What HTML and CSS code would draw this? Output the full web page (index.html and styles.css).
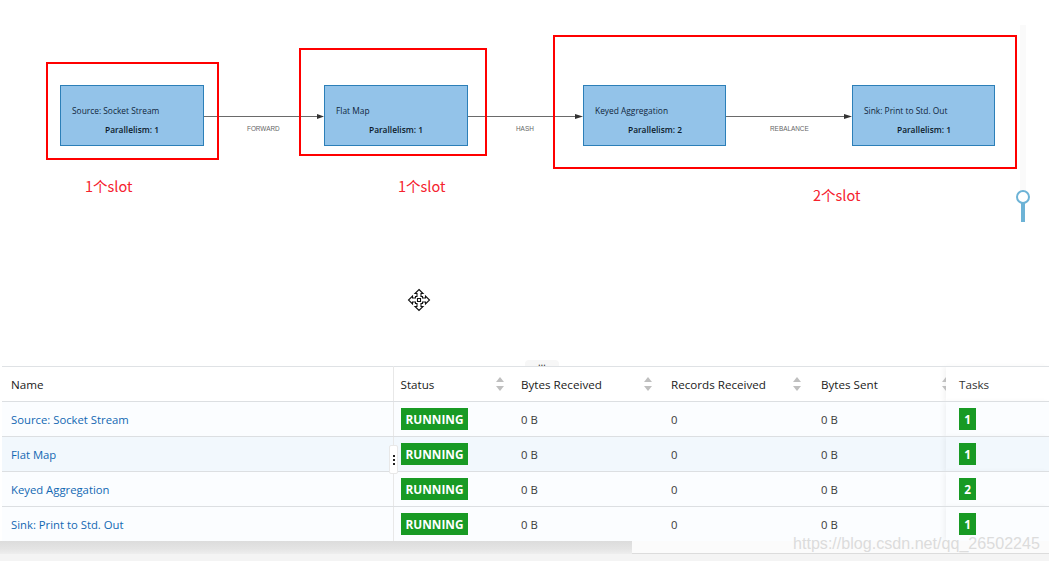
FILE: index.html
```html
<!DOCTYPE html>
<html lang="zh">
<head>
<meta charset="utf-8">
<title>Flink job plan</title>
<link rel="stylesheet" href="styles.css">
</head>
<body>
<section class="canvas">
  <svg class="edges" width="1049" height="366" viewBox="0 0 1049 366">
    <g class="edge">
      <path d="M204 116.5H318"/><path d="M468 116.5H577"/><path d="M726 116.5H846"/>
    </g>
    <g class="arrow">
      <path d="M317 114L324 116.5L317 119Z"/>
      <path d="M575 114L583 116.5L575 119Z"/>
      <path d="M844 114L852 116.5L844 119Z"/>
    </g>
  </svg>
  <div class="node n1"><span class="node-name">Source: Socket Stream</span><span class="node-par">Parallelism: 1</span></div>
  <div class="node n2"><span class="node-name">Flat Map</span><span class="node-par">Parallelism: 1</span></div>
  <div class="node n3"><span class="node-name">Keyed Aggregation</span><span class="node-par">Parallelism: 2</span></div>
  <div class="node n4"><span class="node-name">Sink: Print to Std. Out</span><span class="node-par">Parallelism: 1</span></div>
  <span class="edge-label l1">FORWARD</span>
  <span class="edge-label l2">HASH</span>
  <span class="edge-label l3">REBALANCE</span>
  <div class="slot s1"></div>
  <div class="slot s2"></div>
  <div class="slot s3"></div>
  <span class="slot-label t1">1个slot</span>
  <span class="slot-label t2">1个slot</span>
  <span class="slot-label t3">2个slot</span>
  <div class="zoom-track"></div>
  <div class="zoom-stem"></div>
  <div class="zoom-knob"></div>
  <svg class="move-cursor" width="24" height="24" viewBox="0 0 24 24">
    <path d="M12 1.5L16 5.5H14V8.5H15.5V10H18.5V8L22.5 12L18.5 16V14H15.5V15.5H14V18.5H16L12 22.5L8 18.5H10V15.5H8.5V14H5.5V16L1.5 12L5.5 8V10H8.5V8.5H10V5.5H8Z"/>
    <path d="M10.5 10.5H13.5V13.5H10.5Z"/>
  </svg>
</section>
<section class="panel">
  <div class="handle-h">…</div>
  <table class="grid">
    <colgroup>
      <col class="c-name"><col class="c-status"><col class="c-recv"><col class="c-recs"><col class="c-sent"><col class="c-tasks">
    </colgroup>
    <thead>
      <tr>
        <th class="divider">Name</th>
        <th><div class="th-in"><span>Status</span><i class="sort"></i></div></th>
        <th><div class="th-in"><span>Bytes Received</span><i class="sort"></i></div></th>
        <th><div class="th-in"><span>Records Received</span><i class="sort"></i></div></th>
        <th class="clip"><div class="th-in"><span>Bytes Sent</span><i class="sort"></i></div></th>
        <th class="fixed">Tasks</th>
      </tr>
    </thead>
    <tbody>
      <tr>
        <td class="divider"><a href="#">Source: Socket Stream</a></td>
        <td><span class="tag">RUNNING</span></td><td>0 B</td><td>0</td><td>0 B</td>
        <td class="fixed"><span class="tag count">1</span></td>
      </tr>
      <tr class="hover">
        <td class="divider"><a href="#">Flat Map</a></td>
        <td><span class="tag">RUNNING</span></td><td>0 B</td><td>0</td><td>0 B</td>
        <td class="fixed"><span class="tag count">1</span></td>
      </tr>
      <tr>
        <td class="divider"><a href="#">Keyed Aggregation</a></td>
        <td><span class="tag">RUNNING</span></td><td>0 B</td><td>0</td><td>0 B</td>
        <td class="fixed"><span class="tag count">2</span></td>
      </tr>
      <tr>
        <td class="divider"><a href="#">Sink: Print to Std. Out</a></td>
        <td><span class="tag">RUNNING</span></td><td>0 B</td><td>0</td><td>0 B</td>
        <td class="fixed"><span class="tag count">1</span></td>
      </tr>
    </tbody>
  </table>
  <div class="handle-v"><b></b><b></b><b></b></div>
  <div class="footer"><div class="scrollbar"></div><div class="footer-rest"></div></div>
  <span class="watermark">https://blog.csdn.net/qq_26502245</span>
</section>
</body>
</html>
```

FILE: styles.css
```css
* { box-sizing: border-box; }
html, body { margin: 0; padding: 0; }
body {
  width: 1049px;
  height: 561px;
  overflow: hidden;
  background: #fff;
  font-family: "Open Sans", "Noto Sans", sans-serif;
}

/* graph canvas: nodes sit at free positions */
.canvas { position: relative; width: 1049px; height: 366px; background: #fff; }
.edges { position: absolute; left: 0; top: 0; }
.edge path { stroke: #6a6a6a; stroke-width: 1; fill: none; }
.arrow path { fill: #333; }

.node {
  position: absolute;
  top: 85px;
  width: 144px;
  height: 61px;
  background: #93c3e9;
  border: 1px solid #2c7fb8;
  color: #10263c;
  font-size: 8.4px;
  line-height: 12px;
}
.n1 { left: 60px; }
.n2 { left: 324px; }
.n3 { left: 583px; width: 143px; }
.n4 { left: 852px; width: 143px; }
.node-name { position: absolute; left: 11px; top: 19px; white-space: nowrap; }
.node-par { position: absolute; left: 44px; top: 38px; font-weight: 600; white-space: nowrap; color: #0b1a2a; }

.edge-label {
  position: absolute;
  top: 124px;
  font-family: "Liberation Sans", sans-serif;
  font-size: 6.4px;
  line-height: 10px;
  color: #666;
}
.l1 { left: 247px; }
.l2 { left: 516px; }
.l3 { left: 770px; }

.slot { position: absolute; border: 2px solid #f00; }
.s1 { left: 46px; top: 62px; width: 173px; height: 98px; }
.s2 { left: 299px; top: 48px; width: 188px; height: 108px; }
.s3 { left: 553px; top: 35px; width: 464px; height: 134px; }

.slot-label {
  position: absolute;
  color: #f5222d;
  font-family: "Noto Sans CJK SC", "Noto Sans", sans-serif;
  font-size: 14.5px;
  line-height: 18px;
  white-space: nowrap;
}
.t1 { left: 85px; top: 177px; }
.t2 { left: 398px; top: 177px; }
.t3 { left: 813px; top: 186px; }

.zoom-track { position: absolute; left: 1020px; top: 25px; width: 6px; height: 165px; background: #fafafa; }
.zoom-stem { position: absolute; left: 1021px; top: 200px; width: 4px; height: 22px; background: #6db3d6; }
.zoom-knob {
  position: absolute;
  left: 1016px;
  top: 190px;
  width: 14px;
  height: 14px;
  border: 2px solid #6db3d6;
  border-radius: 50%;
  background: #fff;
}
.move-cursor { position: absolute; left: 407px; top: 288px; }
.move-cursor path { fill: #fff; stroke: #111; stroke-width: 1.1; }

/* table panel */
.panel { position: relative; width: 1049px; height: 195px; padding-left: 2px; background: #fff; }
.grid {
  width: 1047px;
  table-layout: fixed;
  border-collapse: collapse;
  background: #fff;
  border-top: 1px solid #dfe2e5;
  font-size: 11.3px;
  color: #3a3a3a;
}
.c-name { width: 391px; }
.c-status { width: 120px; }
.c-recv { width: 150px; }
.c-recs { width: 150px; }
.c-sent { width: 133px; }
.c-tasks { width: 103px; }
.grid th, .grid td {
  height: 35px;
  padding: 0 0 0 8px;
  border-bottom: 1px solid #dcdfe2;
  text-align: left;
  white-space: nowrap;
  vertical-align: middle;
}
.grid th { font-weight: 400; font-size: 11.65px; color: #1a1a1a; background: #fff; }
.grid td { background: #fbfdff; padding-top: 1px; }
.grid tr.hover td { background: #f2f8fd; }
.grid tbody tr:last-child td { border-bottom: 0; height: 34px; padding-top: 2px; }
.grid th:first-child, .grid td:first-child { padding-left: 9px; }
.grid th:nth-child(2), .grid td:nth-child(2) { padding-left: 7px; }
.divider { border-right: 1px solid #e8e8e8; }
.grid a { color: #1268b3; text-decoration: none; }

.th-in { display: flex; align-items: center; justify-content: space-between; padding-right: 9px; }
th:nth-child(3) .th-in { padding-right: 11px; }
th:nth-child(4) .th-in { padding-right: 12px; }
.grid th.clip { overflow: hidden; }
.clip .th-in { width: calc(100% + 4px); padding-right: 0; }
.sort { position: relative; display: block; width: 8px; height: 14px; }
.sort::before, .sort::after {
  content: "";
  position: absolute;
  left: 0;
  border-left: 4px solid transparent;
  border-right: 4px solid transparent;
}
.sort::before { top: 0; border-bottom: 5px solid #bfbfbf; }
.sort::after { bottom: 0; border-top: 5px solid #bfbfbf; }

.grid th.fixed, .grid td.fixed { box-shadow: -2px 0 5px rgba(0, 0, 0, .05); padding-left: 13px; background-clip: padding-box; }
.grid th.fixed { color: #333; }

.tag {
  display: inline-block;
  height: 22px;
  margin-top: -2px;
  padding: 0 5px;
  background: #189a24;
  color: #fff;
  font-weight: 700;
  font-size: 11.8px;
  line-height: 22px;
  vertical-align: middle;
}
.tag.count { width: 17px; padding: 0; text-align: center; }

.handle-h {
  position: absolute;
  left: 525px;
  top: -6px;
  width: 34px;
  height: 6px;
  background: #f7f7f7;
  border-radius: 4px 4px 0 0;
  font-size: 10px;
  line-height: 4px;
  text-align: center;
  color: #333;
}
.handle-v {
  position: absolute;
  left: 389px;
  top: 79px;
  width: 9px;
  height: 29px;
  display: flex;
  flex-direction: column;
  align-items: center;
  justify-content: center;
  gap: 2px;
  background: #fff;
  border: 1px solid #e8e8e8;
  border-radius: 2px;
}
.handle-v b { display: block; width: 2px; height: 2px; background: #222; }

.footer { display: flex; height: 21px; margin-left: -2px; background: #f4f4f4; }
.scrollbar {
  width: 632px;
  height: 13px;
  background: linear-gradient(#dcdcdc, #e4e4e4 60%, #eeeeee);
}
.footer-rest { flex: 1; height: 13px; background: #fbfbfb; border-bottom: 1px solid #dcdcdc; }
.watermark {
  position: absolute;
  left: 793px;
  top: 167px;
  font-family: "Liberation Sans", sans-serif;
  font-size: 16.1px;
  line-height: 20px;
  color: #dcdcdc;
  white-space: nowrap;
}
```
